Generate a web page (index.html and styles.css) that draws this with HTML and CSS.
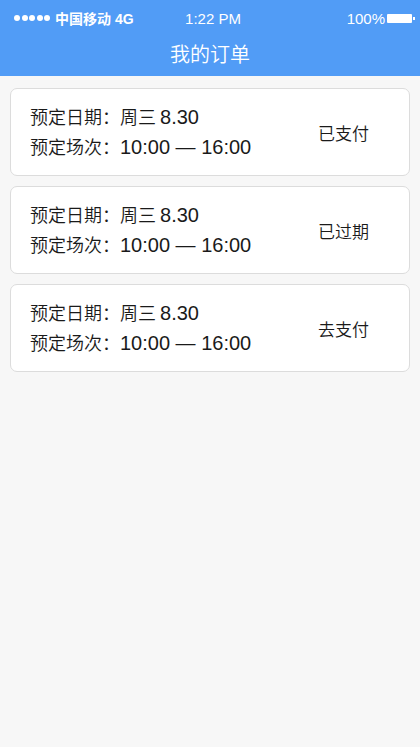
FILE: index.html
```html
<!DOCTYPE html>
<html lang="zh-CN">
<head>
<meta charset="UTF-8" />
<meta name="viewport" content="width=device-width, initial-scale=1.0" />
<title>我的订单</title>
<link rel="stylesheet" href="styles.css">
</head>
<body>
  <header class="topbar">
    <div class="status">
      <span class="carrier"><span class="dots"><i></i><i></i><i></i><i></i><i></i></span>中国移动 4G</span>
      <span class="clock">1:22 PM</span>
      <span class="battery">100%<i class="cell"></i></span>
    </div>
    <h1 class="title">我的订单</h1>
  </header>
  <main class="orders">
    <div class="order">
      <div class="info">
        <p>预定日期：周三 <span class="num">8.30</span></p>
        <p>预定场次：<span class="num">10:00 — 16:00</span></p>
      </div>
      <span class="state">已支付</span>
    </div>
    <div class="order">
      <div class="info">
        <p>预定日期：周三 <span class="num">8.30</span></p>
        <p>预定场次：<span class="num">10:00 — 16:00</span></p>
      </div>
      <span class="state">已过期</span>
    </div>
    <div class="order">
      <div class="info">
        <p>预定日期：周三 <span class="num">8.30</span></p>
        <p>预定场次：<span class="num">10:00 — 16:00</span></p>
      </div>
      <span class="state">去支付</span>
    </div>
  </main>
</body>
</html>
```

FILE: styles.css
```css
html {
  margin: 0;
  padding: 0;
  box-sizing: border-box;
}

body {
  margin: 0;
  min-height: 747px;
  font-family: "Noto Sans CJK SC", "Noto Sans", sans-serif;
  background-color: #f7f7f7;
  color: #1a1a1a;
}

.topbar {
  background-color: #519cf6;
  color: #ffffff;
  height: 76px;
}

.status {
  display: flex;
  justify-content: space-between;
  align-items: center;
  height: 36px;
  padding: 0 8px 0 14px;
  font-family: "Liberation Sans", "Noto Sans CJK SC", sans-serif;
  font-size: 14px;
}

.carrier {
  width: 150px;
  display: flex;
  align-items: center;
  font-weight: bold;
  font-size: 14px;
}

.dots {
  display: flex;
  gap: 1.5px;
  margin-right: 5px;
}

.dots i {
  width: 6px;
  height: 6px;
  border-radius: 50%;
  background: #ffffff;
}

.clock {
  font-size: 15px;
}

.battery {
  width: 150px;
  display: flex;
  justify-content: flex-end;
  align-items: center;
  font-size: 15px;
}

.cell {
  width: 25px;
  height: 9px;
  background: #ffffff;
  margin-left: 2px;
  border-radius: 1px;
  position: relative;
}

.cell::after {
  content: "";
  position: absolute;
  right: -3px;
  top: 3px;
  width: 2px;
  height: 3px;
  background: #ffffff;
}

.title {
  margin: 0;
  text-align: center;
  font-size: 20px;
  font-weight: 350;
  line-height: 36px;
}

.orders {
  display: flex;
  flex-direction: column;
  gap: 10px;
  padding: 12px 10px;
}

.order {
  display: flex;
  justify-content: space-between;
  align-items: center;
  height: 88px;
  box-sizing: border-box;
  padding: 0 40px 0 19px;
  background: #ffffff;
  border: 1px solid #dcdcdc;
  border-radius: 7px;
}

.info p {
  margin: 0;
  font-size: 18px;
  font-weight: 350;
  line-height: 29px;
}

.num {
  font-family: "Liberation Sans", sans-serif;
  font-size: 20px;
  font-weight: normal;
}

.state {
  font-size: 17px;
  font-weight: 350;
}
```
